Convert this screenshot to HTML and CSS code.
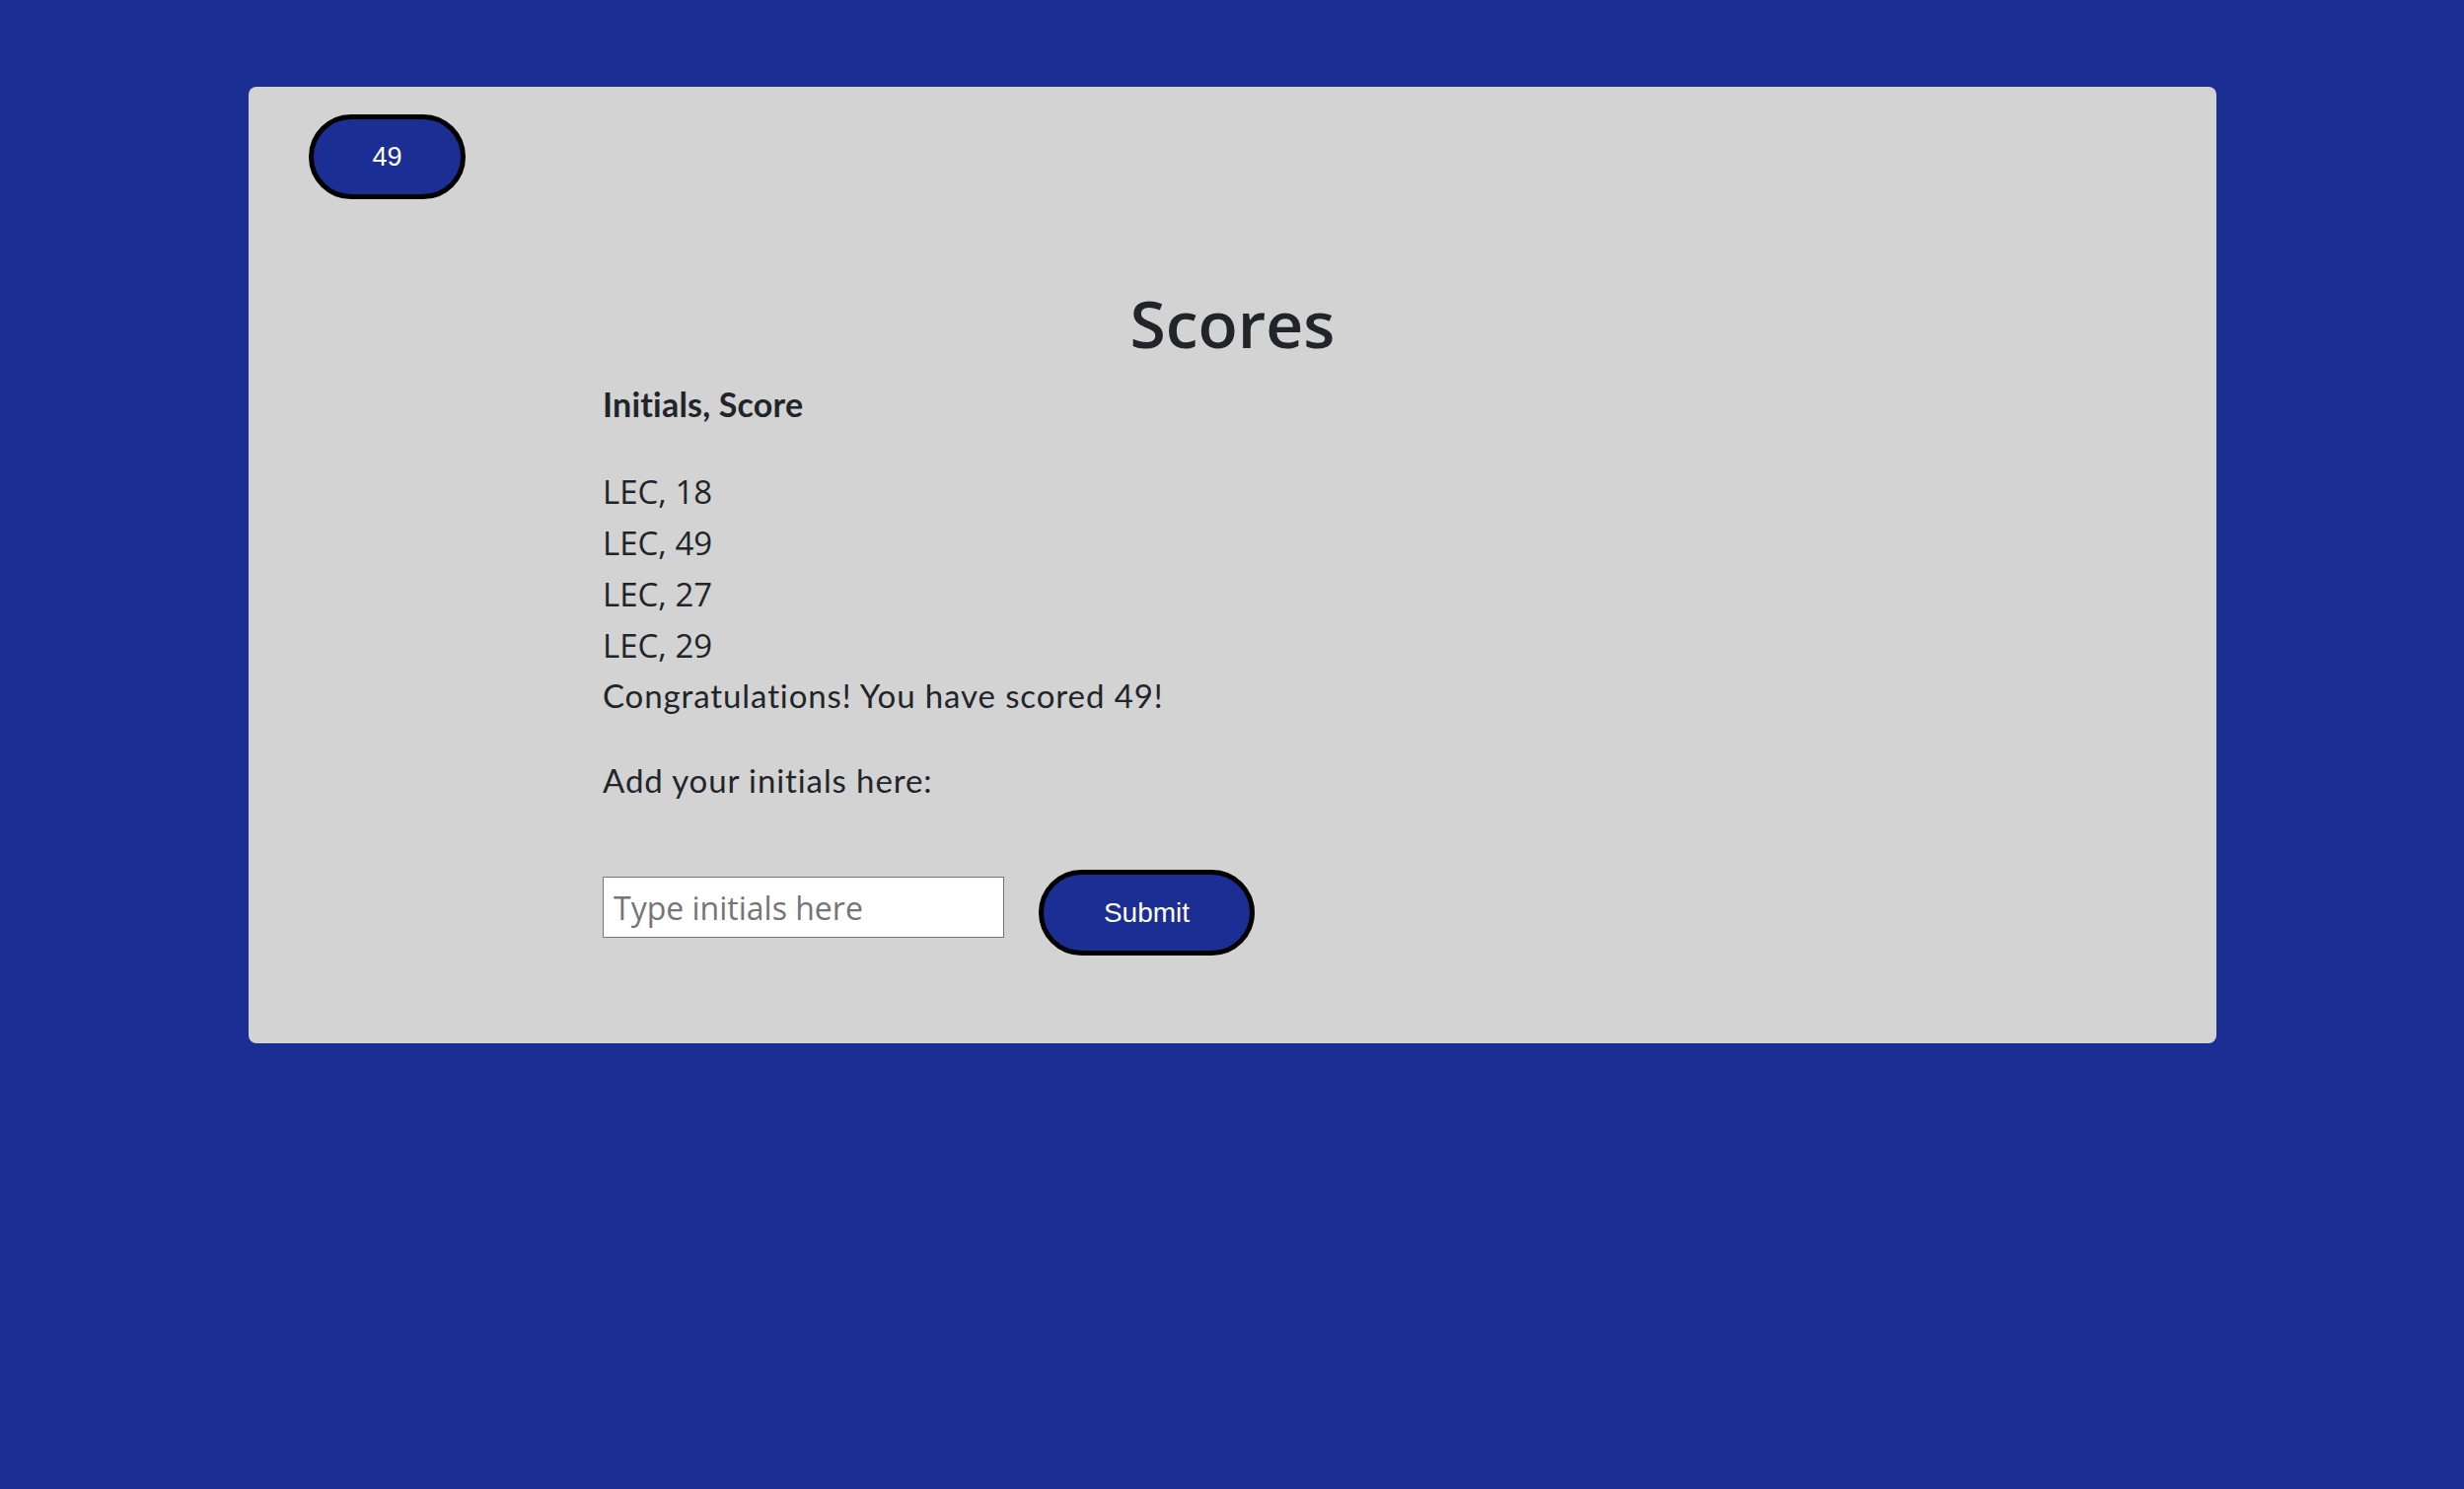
FILE: index.html
```html
<!DOCTYPE html>
<html lang="en">
<head>
<meta charset="utf-8">
<title>Scores</title>
<link rel="stylesheet" href="styles.css">
</head>
<body>
<main class="card">
  <div class="badge">49</div>
  <h1 class="title">Scores</h1>
  <section class="content">
    <h2 class="col-head">Initials, Score</h2>
    <ul class="score-list">
      <li>LEC, 18</li>
      <li>LEC, 49</li>
      <li>LEC, 27</li>
      <li>LEC, 29</li>
    </ul>
    <p class="congrats">Congratulations! You have scored 49!</p>
    <p class="prompt">Add your initials here:</p>
    <form class="entry">
      <input class="initials" type="text" placeholder="Type initials here">
      <button class="submit" type="button">Submit</button>
    </form>
  </section>
</main>
</body>
</html>
```

FILE: styles.css
```css
html, body {
  margin: 0;
  padding: 0;
}
body {
  background: #1a2e94;
  min-height: 1510px;
  color: #212529;
  font-family: "Open Sans", "Noto Sans", sans-serif;
}
.card {
  width: 1995px;
  margin: 88px 0 0 252px;
  background: #d3d3d3;
  border-radius: 8px;
  padding: 28px 0 89px;
  box-sizing: border-box;
}
.badge {
  width: 159px;
  height: 86px;
  box-sizing: border-box;
  margin-left: 61px;
  border: 5px solid #000;
  border-radius: 43px;
  background: #1a2e94;
  color: #fff;
  font-family: "Liberation Sans", Arial, sans-serif;
  font-size: 27px;
  display: flex;
  align-items: center;
  justify-content: center;
}
.title {
  margin: 85px 0 0;
  text-align: center;
  font-family: "Open Sans", sans-serif;
  font-weight: 600;
  font-size: 66px;
  line-height: 80px;
}
.content {
  width: 1277px;
  margin: 0 auto;
}
.col-head {
  margin: 19px 0 0;
  font-family: Lato, sans-serif;
  font-weight: 700;
  font-size: 34px;
  line-height: 48px;
  letter-spacing: 0.2px;
}
.score-list {
  list-style: none;
  margin: 39px 0 0;
  padding: 0;
  font-family: "Open Sans", sans-serif;
  font-size: 33px;
  line-height: 52px;
}
.congrats,
.prompt {
  margin: 0;
  font-family: Lato, sans-serif;
  font-size: 33px;
  line-height: 48px;
  letter-spacing: 0.9px;
}
.prompt {
  margin-top: 38px;
}
.entry {
  display: flex;
  align-items: baseline;
  gap: 35px;
  margin-top: 67px;
}
.initials {
  width: 407px;
  height: 62px;
  box-sizing: border-box;
  border: 1px solid #767676;
  padding: 0 10px;
  font-family: "Open Sans", sans-serif;
  font-size: 32px;
  background: #fff;
  color: #212529;
  outline: none;
  position: relative;
  top: -2px;
}
.initials::placeholder {
  color: #757575;
}
.submit {
  width: 219px;
  height: 87px;
  box-sizing: border-box;
  border: 5px solid #000;
  border-radius: 44px;
  background: #1a2e94;
  color: #fff;
  font-family: "Liberation Sans", Arial, sans-serif;
  font-size: 28px;
  padding: 0;
}
```
